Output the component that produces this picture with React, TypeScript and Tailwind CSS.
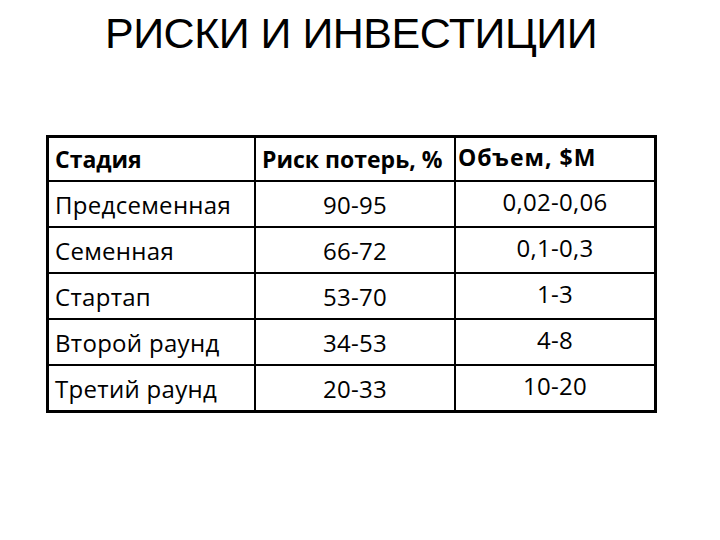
import React from "react";

const rows: [string, string, string][] = [
  ["Предсеменная", "90-95", "0,02-0,06"],
  ["Семенная", "66-72", "0,1-0,3"],
  ["Стартап", "53-70", "1-3"],
  ["Второй раунд", "34-53", "4-8"],
  ["Третий раунд", "20-33", "10-20"],
];

export default function App() {
  return (
    <div className="w-[720px] h-[540px] bg-white text-black overflow-hidden">
      <h1 className="pt-[7px] pl-[105px] text-[43px] leading-[53px] tracking-[-0.5px] font-normal whitespace-nowrap [font-family:'Liberation_Sans',Arial,sans-serif]">
        РИСКИ И ИНВЕСТИЦИИ
      </h1>
      <div className="mt-[75px] ml-[46px] w-[611px] border-[3px] border-black [font-family:'Open_Sans',sans-serif]">
        <div className="grid grid-cols-[207px_200px_198px] h-[44px] border-b-2 border-black font-bold text-[23px]">
          <div className="border-r-2 border-black pl-[6px] flex items-center whitespace-nowrap">Стадия</div>
          <div className="border-r-2 border-black pl-[6px] flex items-center whitespace-nowrap">Риск потерь, %</div>
          <div className="pl-[2px] flex items-center pb-[4px] tracking-[1px] whitespace-nowrap">Объем, $M</div>
        </div>
        {rows.map((r, i) => (
          <div
            key={i}
            className={
              i < rows.length - 1
                ? "grid grid-cols-[207px_200px_198px] h-[46px] border-b-2 border-black text-[24px] tracking-[0.3px]"
                : "grid grid-cols-[207px_200px_198px] h-[44px] text-[24px] tracking-[0.3px]"
            }
          >
            <div className="border-r-2 border-black pl-[6px] flex items-center pt-[2px] whitespace-nowrap">{r[0]}</div>
            <div className="border-r-2 border-black flex items-center justify-center pt-[2px]">{r[1]}</div>
            <div className="flex items-center justify-center pb-[4px]">{r[2]}</div>
          </div>
        ))}
      </div>
    </div>
  );
}
